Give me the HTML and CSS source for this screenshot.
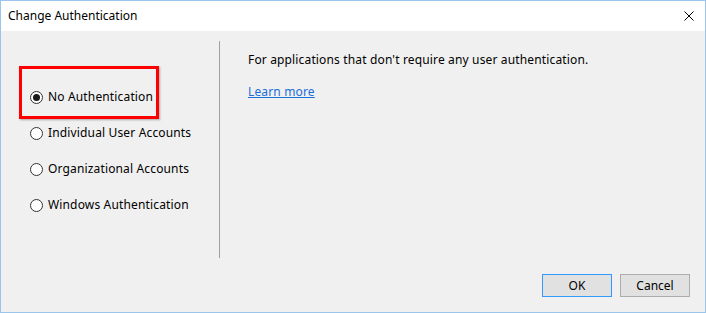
FILE: index.html
```html
<!DOCTYPE html>
<html lang="en">
<head>
  <meta charset="UTF-8">
  <meta name="viewport" content="width=device-width, initial-scale=1.0">
  <title>Change Authentication</title>
  <link rel="stylesheet" href="styles.css">
</head>
<body>
  <div class="dialog">
    <div class="titlebar">
      <span class="title">Change Authentication</span>
      <svg class="close" width="10" height="10" viewBox="0 0 10 10">
        <path d="M0.5 0.5 L9.5 9.5 M9.5 0.5 L0.5 9.5" stroke="#000" stroke-width="1" fill="none"/>
      </svg>
    </div>
    <div class="content">
      <div class="options">
        <div class="option selected highlight">
          <span class="radio"></span>
          <span class="label">No Authentication</span>
        </div>
        <div class="option">
          <span class="radio"></span>
          <span class="label">Individual User Accounts</span>
        </div>
        <div class="option">
          <span class="radio"></span>
          <span class="label">Organizational Accounts</span>
        </div>
        <div class="option">
          <span class="radio"></span>
          <span class="label">Windows Authentication</span>
        </div>
      </div>
      <div class="divider"></div>
      <div class="info">
        <p class="description">For applications that don't require any user authentication.</p>
        <a class="learn" href="#">Learn more</a>
      </div>
    </div>
    <div class="footer">
      <button class="btn default">OK</button>
      <button class="btn">Cancel</button>
    </div>
  </div>
</body>
</html>
```

FILE: styles.css
```css
body {
  margin: 0;
  font-family: "Noto Sans", "Open Sans", sans-serif;
  font-size: 12px;
  letter-spacing: 0.15px;
  color: #000;
}

.dialog {
  box-sizing: border-box;
  width: 706px;
  height: 313px;
  border: 1px solid #9cc5ec;
  background-color: #f0f0f0;
  display: flex;
  flex-direction: column;
}

.titlebar {
  height: 30px;
  background-color: #fff;
  display: flex;
  align-items: center;
  justify-content: space-between;
  padding: 0 11px 0 7px;
  flex-shrink: 0;
}

.title {
  line-height: 16px;
  letter-spacing: 0;
}

.content {
  height: 227px;
  padding-top: 10px;
  box-sizing: border-box;
  display: flex;
  flex-shrink: 0;
}

.options {
  width: 218px;
  box-sizing: border-box;
  padding: 48px 0 0 29px;
  display: flex;
  flex-direction: column;
  gap: 20px;
}

.option {
  height: 16px;
  display: flex;
  align-items: center;
  gap: 5px;
}

.option.highlight {
  position: relative;
}

.option.highlight::before {
  content: "";
  position: absolute;
  left: -11px;
  top: -23px;
  width: 134px;
  height: 47px;
  border: 3px solid #ff0000;
  box-shadow: 1px 1px 2px rgba(0, 0, 0, 0.3);
}

.radio {
  box-sizing: border-box;
  width: 13px;
  height: 13px;
  border: 1px solid #333;
  border-radius: 50%;
  background-color: #fff;
  display: flex;
  align-items: center;
  justify-content: center;
}

.option.selected .radio::after {
  content: "";
  width: 7px;
  height: 7px;
  border-radius: 50%;
  background-color: #1a1a1a;
}

.label {
  line-height: 16px;
}

.divider {
  width: 1px;
  height: 217px;
  background-color: #a0a0a0;
}

.info {
  padding: 11px 0 0 28px;
}

.description {
  margin: 0;
  line-height: 16px;
}

.learn {
  display: inline-block;
  margin-top: 16px;
  line-height: 16px;
  color: #1a6fd8;
}

.footer {
  display: flex;
  justify-content: flex-end;
  gap: 8px;
  padding: 16px 15px 0 0;
}

.btn {
  width: 70px;
  height: 23px;
  font-family: inherit;
  font-size: 12px;
  letter-spacing: 0;
  background-color: #e1e1e1;
  border: 1px solid #adadad;
  padding: 0;
  color: #000;
}

.btn.default {
  border-color: #3399ff;
}
```
